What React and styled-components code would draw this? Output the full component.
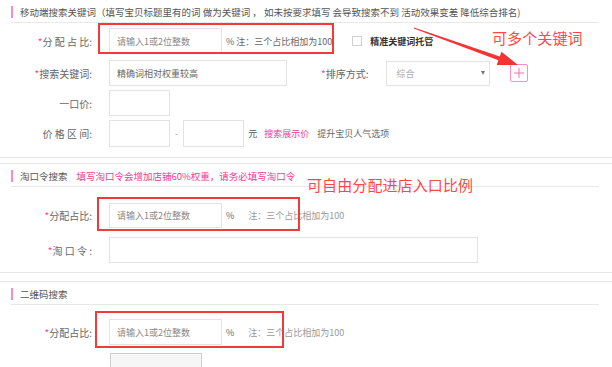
import React from "react";
import styled, { createGlobalStyle } from "styled-components";

const Global = createGlobalStyle`
  * { box-sizing: border-box; }
  body { margin: 0; background: #fff; font-family: "Noto Sans CJK SC", "Noto Sans", sans-serif; }
  input { font-family: inherit; }
`;

const Page = styled.div`
  position: relative;
  width: 612px;
  height: 367px;
  overflow: hidden;
  background: #fff;
  color: #666;
  font-family: "Noto Sans CJK SC", "Noto Sans", sans-serif;
`;

const Section = styled.section`
  border-top: ${(p) => (p.$top ? "1px solid #e6e6e6" : "none")};
  border-bottom: 1px solid #e6e6e6;
  margin-top: ${(p) => p.$mt || 0}px;
`;

const Header = styled.div`
  display: flex;
  align-items: center;
  height: 23px;
  padding-top: 2px;
  margin: 0 13px 0 11px;
  border-bottom: 1px solid #e8e8e8;
  font-size: 9.5px;
  color: #555;
  white-space: nowrap;
  &::before {
    content: "";
    width: 2px;
    height: 12px;
    background: #ff88c8;
    margin-right: 7px;
  }
`;

const HeaderNote = styled.span`
  color: #ee3b96;
  margin-left: 9px;
`;

const Form = styled.div`
  display: flex;
  flex-direction: column;
  gap: ${(p) => p.$gap || 4}px;
  padding-top: ${(p) => p.$pt}px;
  padding-bottom: ${(p) => p.$pb}px;
`;

const Row = styled.div`
  position: relative;
  display: flex;
  align-items: center;
  height: 26px;
  margin-bottom: ${(p) => p.$mb || 0}px;
`;

const Label = styled.label`
  flex-shrink: 0;
  width: 92px;
  margin-right: 17px;
  text-align: right;
  font-size: 10px;
  color: #666;
  white-space: pre;
`;

const Star = styled.span`
  color: #ff3c9a;
`;

const Input = styled.input`
  flex-shrink: 0;
  width: ${(p) => p.$w}px;
  height: ${(p) => p.$h || 26}px;
  border: 1px solid #e3e3e3;
  background: #fff;
  padding: 0 0 0 7px;
  font-size: 9px;
  outline: none;
  &::placeholder {
    color: ${(p) => p.$ph || "#888"};
  }
`;

const Note = styled.span`
  font-size: 9px;
  color: ${(p) => p.$c || "#666"};
  margin-left: ${(p) => p.$ml || 0}px;
  white-space: nowrap;
`;

const Check = styled.span`
  width: 10px;
  height: 10px;
  border: 1px solid #d0d0d0;
  margin-left: 20px;
  flex-shrink: 0;
`;

const Strong = styled.span`
  font-size: 9px;
  font-weight: 700;
  color: #333;
  margin-left: 8px;
  white-space: nowrap;
`;

const SubLabel = styled.span`
  font-size: 10px;
  color: #666;
  margin-left: 34px;
  margin-right: 18px;
  white-space: nowrap;
`;

const Select = styled.div`
  display: flex;
  align-items: center;
  justify-content: space-between;
  width: 104px;
  height: 25px;
  border: 1px solid #e3e3e3;
  padding: 0 4px 0 9px;
  font-size: 9px;
  color: #aaa;
`;

const Caret = styled.span`
  width: 0;
  height: 0;
  border-left: 2.5px solid transparent;
  border-right: 2.5px solid transparent;
  border-top: 4px solid #777;
`;

const PlusBtn = styled.span`
  display: flex;
  align-items: center;
  justify-content: center;
  width: 18px;
  height: 18px;
  margin-left: 20px;
  border: 1px solid #ff8fc2;
  border-radius: 2px;
`;

const Dash = styled.span`
  font-size: 9px;
  color: #999;
  margin: 0 5px;
`;

const LinkText = styled.span`
  font-size: 9px;
  color: #ee3b96;
  margin-left: 7px;
  white-space: nowrap;
`;

const Highlight = styled.div`
  position: absolute;
  left: ${(p) => p.$l}px;
  top: ${(p) => p.$t}px;
  width: ${(p) => p.$w}px;
  height: ${(p) => p.$h}px;
  border: 2px solid #f23a3a;
  pointer-events: none;
`;

const UploadBox = styled.div`
  width: 92px;
  height: 60px;
  margin-left: 110px;
  border: 1px solid #cfcfcf;
  background: #f6f6f6;
`;

const Annotation = styled.div`
  position: absolute;
  left: ${(p) => p.$l}px;
  top: ${(p) => p.$t}px;
  font-size: 15px;
  line-height: 1;
  color: #ff4747;
  white-space: nowrap;
  letter-spacing: 0.1px;
`;

const ArrowSvg = styled.svg`
  position: absolute;
  left: 0;
  top: 0;
  pointer-events: none;
`;

const Plus = () => (
  <svg width="12" height="12" viewBox="0 0 12 12">
    <path d="M6 1v10M1 6h10" stroke="#ff6fb0" strokeWidth="1" fill="none" />
  </svg>
);

export default function App() {
  return (
    <>
      <Global />
      <Page>
        <Section>
          <Header>
            移动端搜索关键词（填写宝贝标题里有的词 做为关键词 ， 如未按要求填写 会导致搜索不到 活动效果变差 降低综合排名)
          </Header>
          <Form $pt={5} $pb={11}>
            <Row $mb={2}>
              <Label>
                <Star>*</Star>分 配 占 比:
              </Label>
              <Input $w={113} placeholder="请输入1或2位整数" />
              <Note $ml={4}>% 注：三个占比相加为100</Note>
              <Check />
              <Strong>精准关键词托管</Strong>
              <Highlight $l={98} $t={-5} $w={236} $h={31} />
            </Row>
            <Row>
              <Label>
                <Star>*</Star>搜索关键词:
              </Label>
              <Input $w={178} $ph="#666" placeholder="精确词相对权重较高" />
              <SubLabel>
                <Star>*</Star>排序方式:
              </SubLabel>
              <Select>
                综合
                <Caret />
              </Select>
              <PlusBtn>
                <Plus />
              </PlusBtn>
            </Row>
            <Row>
              <Label>一口价:</Label>
              <Input $w={61} />
            </Row>
            <Row>
              <Label>价 格 区 间:</Label>
              <Input $w={61} $h={27} />
              <Dash>-</Dash>
              <Input $w={61} $h={27} />
              <Note $ml={4} $c="#555">元</Note>
              <LinkText>搜索展示价</LinkText>
              <Note $ml={8}>提升宝贝人气选项</Note>
            </Row>
          </Form>
        </Section>

        <Section $top $mt={5}>
          <Header>
            淘口令搜索
            <HeaderNote>填写淘口令会增加店铺60%权重，请务必填写淘口令</HeaderNote>
          </Header>
          <Form $pt={15} $pb={9} $gap={9}>
            <Row>
              <Label>
                <Star>*</Star>分配占比:
              </Label>
              <Input $w={113} $h={25} placeholder="请输入1或2位整数" />
              <Note $ml={4}>%</Note>
              <Note $ml={14} $c="#999">注：三个占比相加为100</Note>
              <Highlight $l={97} $t={-5} $w={203} $h={34} />
            </Row>
            <Row>
              <Label>
                <Star>*</Star>淘 口 令 :
              </Label>
              <Input $w={369} />
            </Row>
          </Form>
        </Section>

        <Section $top $mt={8}>
          <Header>二维码搜索</Header>
          <Form $pt={14} $pb={0} $gap={8}>
            <Row>
              <Label>
                <Star>*</Star>分配占比:
              </Label>
              <Input $w={113} placeholder="请输入1或2位整数" />
              <Note $ml={4}>%</Note>
              <Note $ml={14} $c="#999">注：三个占比相加为100</Note>
              <Highlight $l={95} $t={-8} $w={189} $h={37} />
            </Row>
            <UploadBox />
          </Form>
        </Section>

        <ArrowSvg width="612" height="367" viewBox="0 0 612 367">
          <polygon
            points="414,27.6 499.8,56.4 501.4,51.7 518,65 496.7,64.9 498.4,60.2 413.8,28.6"
            fill="#f43434"
          />
        </ArrowSvg>
        <Annotation $l={492} $t={30}>可多个关键词</Annotation>
        <Annotation $l={307} $t={177}>可自由分配进店入口比例</Annotation>
      </Page>
    </>
  );
}
